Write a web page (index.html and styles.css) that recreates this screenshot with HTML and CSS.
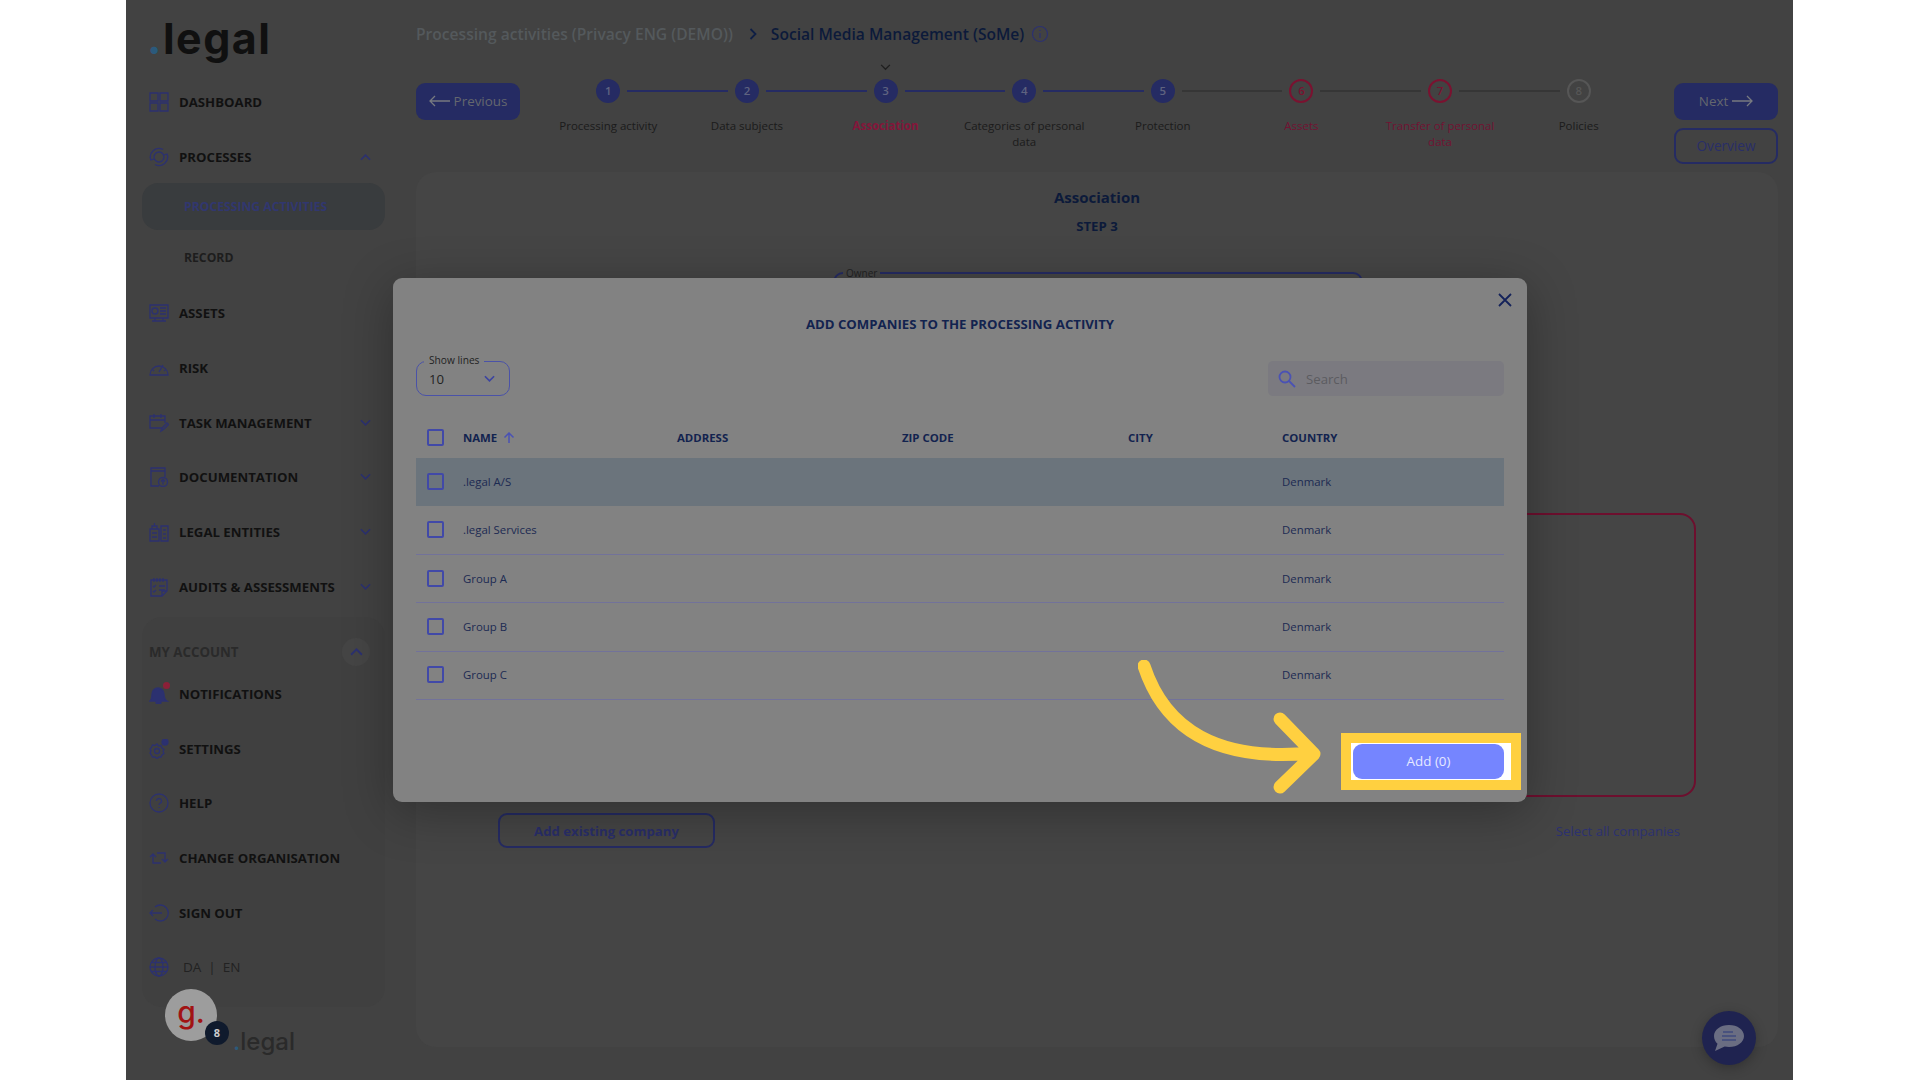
FILE: index.html
```html
<!DOCTYPE html>
<html lang="en">
<head>
  <meta charset="UTF-8">
  <meta name="viewport" content="width=device-width, initial-scale=1.0">
  <title>.legal Add companies</title>
  <link rel="stylesheet" href="styles.css">
</head>
<body>
  <div class="app">
    <aside class="sidebar">
      <div class="logo"><span class="logo-dot">.</span>legal</div>

      <div class="nav-item">
        <svg class="nav-icon" viewBox="0 0 20 20"><path d="M1 1h8v8H1zM11 1h8v8h-8zM1 11h8v8H1zM11 11h8v8h-8z"/></svg>
        <span>Dashboard</span>
      </div>
      <div class="nav-item">
        <svg class="nav-icon" viewBox="0 0 20 20"><circle cx="10" cy="10" r="5"/><path d="M2 13A8.5 8.5 0 0 1 14 2.500M18 7A8.500 8.500 0 0 1 6 17.500M1 10l1 3 3-1M19 10l-1-3-3 1"/></svg>
        <span>Processes</span>
        <svg class="nav-chevron" viewBox="0 0 12 8"><path d="M1 7l5-5 5 5"/></svg>
      </div>
      <div class="sub-item sub-active">Processing activities</div>
      <div class="sub-item">Record</div>
      <div class="nav-item nav-after-sub">
        <svg class="nav-icon" viewBox="0 0 20 20"><path d="M1 2h18v13H1zM6 15v3M14 15v3M3 18h14"/><circle cx="6" cy="8" r="3"/><path d="M11 5h6M11 8h6M11 11h6"/></svg>
        <span>Assets</span>
      </div>
      <div class="nav-item">
        <svg class="nav-icon" viewBox="0 0 20 20"><path d="M1 17a9 9 0 0 1 18 0zM10 14l4-7M4 12l1 1M16 12l-1 1"/></svg>
        <span>Risk</span>
      </div>
      <div class="nav-item">
        <svg class="nav-icon" viewBox="0 0 20 20"><path d="M14 15H1V3h15v7M1 7h15M5 1v4M12 1v4M12 18l1-3 5-5 1.500 1.500-5 5z"/></svg>
        <span>Task management</span>
        <svg class="nav-chevron" viewBox="0 0 12 8"><path d="M1 1l5 5 5-5"/></svg>
      </div>
      <div class="nav-item">
        <svg class="nav-icon" viewBox="0 0 20 20"><path d="M10 19H2V1h14v9M2 4h14"/><circle cx="14" cy="15" r="4.500"/><path d="M14 17.500v-5M12 14.500l2-2 2 2"/></svg>
        <span>Documentation</span>
        <svg class="nav-chevron" viewBox="0 0 12 8"><path d="M1 1l5 5 5-5"/></svg>
      </div>
      <div class="nav-item">
        <svg class="nav-icon" viewBox="0 0 20 20"><path d="M1 19V7h9v12zM3 7V4h5v3M5.500 4V1M12 19V4h7v15zM3 11h5M3 15h5M14 8h3M14 12h3M14 16h3"/></svg>
        <span>Legal entities</span>
        <svg class="nav-chevron" viewBox="0 0 12 8"><path d="M1 1l5 5 5-5"/></svg>
      </div>
      <div class="nav-item">
        <svg class="nav-icon" viewBox="0 0 20 20"><path d="M2 3h16v11l-5 5H2zM5 1v4M8 1v4M11 1v4M14 1v4M4 9l1 1 2-2M4 14l1 1 2-2M10 9h6M10 13h6M13 19v-5h5"/></svg>
        <span>Audits &amp; assessments</span>
        <svg class="nav-chevron" viewBox="0 0 12 8"><path d="M1 1l5 5 5-5"/></svg>
      </div>

      <section class="account">
        <div class="account-head">
          <span>My account</span>
          <span class="account-toggle"><svg viewBox="0 0 12 8"><path d="M1 7l5-5 5 5"/></svg></span>
        </div>
        <div class="nav-item">
          <svg class="nav-icon nav-icon-fill" viewBox="0 0 20 20"><path d="M1 17c2-2 2-4 2-7a6 6 0 0 1 12 0c0 3 0 5 3 7zM7 18a2.500 2.500 0 0 0 5 0z"/></svg>
          <i class="dot-red"></i>
          <span>Notifications</span>
        </div>
        <div class="nav-item">
          <svg class="nav-icon" viewBox="0 0 20 20"><circle cx="8" cy="12" r="2.500"/><path d="M8 5l1.500 2 2.500-.5 1 2.500 2 1.500-1 2 1 2-2 1.500-1 2H10l-2 1.500-2-1.500-2.500 0-1-2L1 14l1-2-1-2 1.500-1.500 1-2.500L6 6.500z"/><circle class="dot-fill" cx="16" cy="3" r="3"/></svg>
          <span>Settings</span>
        </div>
        <div class="nav-item">
          <svg class="nav-icon" viewBox="0 0 20 20"><circle cx="10" cy="10" r="9"/><path d="M7.500 8a2.500 2.500 0 1 1 3.500 2.300c-.7.4-1 .8-1 1.700M10 14v1"/></svg>
          <span>Help</span>
        </div>
        <div class="nav-item">
          <svg class="nav-icon" viewBox="0 0 20 20"><path d="M1 9l3-3 3 3M4 6v9h8M19 11l-3 3-3-3M16 14V5H8"/></svg>
          <span>Change organisation</span>
        </div>
        <div class="nav-item">
          <svg class="nav-icon" viewBox="0 0 20 20"><path d="M6 4a8 8 0 1 1 0 12M13 10H1M4 7l-3 3 3 3"/></svg>
          <span>Sign out</span>
        </div>
        <div class="nav-item lang-row">
          <svg class="nav-icon" viewBox="0 0 20 20"><circle cx="10" cy="10" r="9"/><ellipse cx="10" cy="10" rx="4" ry="9"/><path d="M1 10h18M2 5.500h16M2 14.500h16"/></svg>
          <span class="lang">DA &nbsp;|&nbsp; EN</span>
        </div>
      </section>

      <div class="avatar">g.<span class="avatar-badge">8</span></div>
      <div class="logo-small"><span class="logo-dot">.</span>legal</div>
    </aside>

    <main class="main">
      <div class="crumbs">
        <span class="crumb-parent">Processing activities (Privacy ENG (DEMO))</span>
        <svg class="crumb-sep" viewBox="0 0 8 12"><path d="M1.500 1l5 5-5 5"/></svg>
        <span class="crumb-current">Social Media Management (SoMe)</span>
        <svg class="crumb-info" viewBox="0 0 18 18"><circle cx="9" cy="9" r="7.500"/><path d="M9 8v5M9 5v1"/></svg>
      </div>

      <div class="wizard">
        <button class="btn-solid btn-prev">
          <svg class="btn-arrow" viewBox="0 0 22 12"><path d="M21 6H1M6 1L1 6l5 5"/></svg>Previous
        </button>
        <ol class="steps">
          <li class="step done"><div class="track"><b></b><span>1</span><b class="on"></b></div><p>Processing activity</p></li>
          <li class="step done"><div class="track"><b class="on"></b><span>2</span><b class="on"></b></div><p>Data subjects</p></li>
          <li class="step done current">
            <svg class="step-marker" viewBox="0 0 12 8"><path d="M1 1l5 5 5-5"/></svg>
            <div class="track"><b class="on"></b><span>3</span><b class="on"></b></div><p>Association</p>
          </li>
          <li class="step done"><div class="track"><b class="on"></b><span>4</span><b class="on"></b></div><p>Categories of personal data</p></li>
          <li class="step done"><div class="track"><b class="on"></b><span>5</span><b class="off"></b></div><p>Protection</p></li>
          <li class="step error"><div class="track"><b class="off"></b><span>6</span><b class="off"></b></div><p>Assets</p></li>
          <li class="step error"><div class="track"><b class="off"></b><span>7</span><b class="off"></b></div><p>Transfer of personal data</p></li>
          <li class="step todo"><div class="track"><b class="off"></b><span>8</span><b></b></div><p>Policies</p></li>
        </ol>
        <div class="wizard-right">
          <button class="btn-solid btn-next">Next
            <svg class="btn-arrow" viewBox="0 0 22 12"><path d="M1 6h20M16 1l5 5-5 5"/></svg>
          </button>
          <button class="btn-outline">Overview</button>
        </div>
      </div>

      <div class="card">
        <h2>Association</h2>
        <h3>STEP 3</h3>
        <fieldset class="owner"><legend>Owner</legend></fieldset>
        <div class="red-box"></div>
        <div class="card-actions">
          <button class="btn-add-existing">Add existing company</button>
          <span class="select-all">Select all companies</span>
        </div>
      </div>
    </main>

    <div class="modal">
      <svg class="modal-close" viewBox="0 0 14 14"><path d="M1 1l12 12M13 1L1 13"/></svg>
      <h4>ADD COMPANIES TO THE PROCESSING ACTIVITY</h4>
      <div class="modal-tools">
        <div class="lines-select">
          <span class="lines-label">Show lines</span>
          <span>10</span>
          <svg viewBox="0 0 12 8"><path d="M1 1l5 5 5-5"/></svg>
        </div>
        <div class="search">
          <svg viewBox="0 0 18 18"><circle cx="7" cy="7" r="5.500"/><path d="M11 11l6 6"/></svg>
          <span>Search</span>
        </div>
      </div>
      <table class="companies">
        <thead>
          <tr>
            <th class="col-check"><i class="check"></i></th>
            <th class="col-name">NAME <svg class="sort" viewBox="0 0 12 12"><path d="M6 11V1M1.500 5.500L6 1l4.500 4.500"/></svg></th>
            <th class="col-address">ADDRESS</th>
            <th class="col-zip">ZIP CODE</th>
            <th class="col-city">CITY</th>
            <th>COUNTRY</th>
          </tr>
        </thead>
        <tbody>
          <tr class="row-hover"><td><i class="check"></i></td><td>.legal A/S</td><td></td><td></td><td></td><td>Denmark</td></tr>
          <tr><td><i class="check"></i></td><td>.legal Services</td><td></td><td></td><td></td><td>Denmark</td></tr>
          <tr><td><i class="check"></i></td><td>Group A</td><td></td><td></td><td></td><td>Denmark</td></tr>
          <tr><td><i class="check"></i></td><td>Group B</td><td></td><td></td><td></td><td>Denmark</td></tr>
          <tr><td><i class="check"></i></td><td>Group C</td><td></td><td></td><td></td><td>Denmark</td></tr>
        </tbody>
      </table>
      <div class="add-highlight">
        <button class="btn-modal-add">Add (0)</button>
      </div>
    </div>

    <svg class="guide-arrow" viewBox="0 0 200 140">
      <path d="M6 6C27 70 80 102 174 93M142 59l34 35-34 33"/>
    </svg>

    <div class="chat">
      <svg viewBox="0 0 32 28"><path class="chat-bubble" d="M16 1c8.500 0 15 4.800 15 11s-6.500 11-15 11c-1.500 0-3-.2-4.300-.5L2 27l2.500-7.200C2.300 17.800 1 15.100 1 12 1 5.800 7.500 1 16 1z"/><path class="chat-lines" d="M10 8h10M9 12h14M9 16h14"/></svg>
    </div>
  </div>
</body>
</html>
```

FILE: styles.css
```css
* {
  box-sizing: border-box;
}
body {
  margin: 0;
  background-color: #fff;
  font-family: "Open Sans", Arial, sans-serif;
  color: #1b1b1b;
}
.app {
  position: relative;
  display: flex;
  width: 1667px;
  height: 1080px;
  margin-left: 126px;
  overflow: hidden;
  background-color: #424242;
}

/* sidebar */
.sidebar {
  position: relative;
  flex: 0 0 267px;
  padding: 0 8px 0 16px;
}
.logo {
  height: 74.5px;
  padding: 8px 0 0 5px;
  font-family: Inter, sans-serif;
  font-size: 43px;
  font-weight: 700;
  letter-spacing: 1.5px;
  line-height: 60px;
  color: #101010;
}
.logo-dot {
  color: #2b5a7c;
}
.nav-item {
  position: relative;
  display: flex;
  align-items: center;
  height: 54.8px;
  padding-left: 7px;
  font-size: 13.2px;
  font-weight: 700;
  text-transform: uppercase;
  color: #111;
}
.nav-after-sub {
  margin-top: 5px;
}
.nav-icon {
  flex: 0 0 20px;
  width: 20px;
  height: 20px;
  margin-right: 10px;
  fill: none;
  stroke: #2c3170;
  stroke-width: 1.3;
}
.nav-icon-fill {
  fill: #2c3170;
}
.dot-fill {
  fill: #2c3170;
}
.dot-red {
  position: absolute;
  left: 21px;
  top: 15px;
  width: 7px;
  height: 7px;
  border-radius: 50%;
  background-color: #8c2038;
}
.nav-chevron {
  position: absolute;
  left: 218px;
  width: 11px;
  height: 8px;
  fill: none;
  stroke: #2c3170;
  stroke-width: 1.8;
}
.sub-item {
  display: flex;
  align-items: center;
  height: 47px;
  margin-bottom: 4px;
  padding-left: 42px;
  border-radius: 16px;
  font-size: 12.2px;
  font-weight: 700;
  text-transform: uppercase;
  color: #1d1d1d;
}
.sub-active {
  margin-top: -1.5px;
  background-color: #393c3e;
  color: #31376f;
}
.account {
  position: absolute;
  left: 16px;
  top: 617px;
  width: 243px;
  height: 390px;
  padding-top: 19px;
  border-radius: 20px;
  background-color: #404040;
}
.account .nav-item {
  height: 54.6px;
}
.account-head {
  display: flex;
  align-items: center;
  justify-content: space-between;
  height: 31px;
  padding: 0 15px 0 7px;
  font-size: 13.3px;
  font-weight: 700;
  text-transform: uppercase;
  color: #2a2a2a;
}
.account-toggle {
  display: flex;
  align-items: center;
  justify-content: center;
  width: 28px;
  height: 28px;
  border-radius: 50%;
  background-color: #454545;
}
.account-toggle svg {
  width: 13px;
  height: 9px;
  fill: none;
  stroke: #2c3170;
  stroke-width: 1.8;
}
.lang-row {
  font-weight: 400;
  text-transform: none;
}
.lang {
  margin-left: 4px;
  font-size: 13.5px;
  color: #222;
}
.avatar {
  position: absolute;
  left: 39px;
  top: 989px;
  width: 52px;
  height: 52px;
  border-radius: 50%;
  background-color: #9d9d9d;
  font-family: Inter, sans-serif;
  font-size: 30px;
  font-weight: 500;
  line-height: 46px;
  text-align: center;
  color: #a11313;
}
.avatar-badge {
  position: absolute;
  left: 40px;
  top: 32px;
  width: 24px;
  height: 24px;
  border-radius: 50%;
  background-color: #0f1a2d;
  font-family: "Open Sans", sans-serif;
  font-size: 11px;
  font-weight: 700;
  line-height: 24px;
  color: #ccc;
}
.logo-small {
  position: absolute;
  left: 107px;
  top: 1027px;
  font-family: Inter, sans-serif;
  font-size: 24px;
  font-weight: 500;
  line-height: 30px;
  color: #2a2a2a;
}

/* main */
.main {
  display: flex;
  flex: 1;
  flex-direction: column;
  padding: 0 23px 33px;
}
.crumbs {
  display: flex;
  align-items: center;
  height: 68px;
  font-size: 15.6px;
  font-weight: 600;
}
.crumb-parent {
  color: #54595c;
}
.crumb-sep {
  width: 8px;
  height: 12px;
  margin: 0 14px 0 16px;
  fill: none;
  stroke: #0f1f45;
  stroke-width: 1.8;
}
.crumb-current {
  color: #0c1a3a;
}
.crumb-info {
  width: 18px;
  height: 18px;
  margin-left: 7px;
  fill: none;
  stroke: #2c3170;
  stroke-width: 1.2;
}
.wizard {
  display: flex;
  align-items: flex-start;
  height: 104px;
}
.btn-solid,
.btn-outline,
.btn-add-existing {
  font-family: inherit;
  border-radius: 9px;
}
.btn-solid {
  display: flex;
  align-items: center;
  justify-content: center;
  gap: 3px;
  height: 37px;
  margin-top: 15px;
  padding-bottom: 2px;
  border: 0;
  background-color: #252b63;
  font-size: 13.4px;
  color: #64676e;
}
.btn-prev {
  flex: 0 0 104px;
}
.btn-arrow {
  width: 22px;
  height: 12px;
  fill: none;
  stroke: #777a80;
  stroke-width: 1.3;
}
.steps {
  display: grid;
  flex: 0 0 1109px;
  grid-template-columns: repeat(8, 1fr);
  margin: 10px 26px 0 19px;
  padding: 0;
  list-style: none;
}
.step {
  position: relative;
  text-align: center;
  font-size: 11.5px;
  line-height: 16px;
}
.step p {
  margin: 14px 2px 0;
}
.step-marker {
  position: absolute;
  left: 50%;
  top: -14px;
  width: 11px;
  height: 7px;
  margin-left: -5.5px;
  fill: none;
  stroke: #1f1f1f;
  stroke-width: 1.5;
}
.track {
  display: flex;
  align-items: center;
  height: 26px;
}
.track b {
  flex: 1;
  height: 2px;
}
.track b:first-child {
  margin-right: 7px;
}
.track b:last-child {
  margin-left: 7px;
}
.track b.on {
  background-color: #252b63;
}
.track b.off {
  background-color: #363636;
}
.track span {
  flex: 0 0 24px;
  height: 24px;
  border-radius: 50%;
  font-size: 11.5px;
  font-weight: 600;
  line-height: 24px;
}
.done .track span {
  background-color: #252b63;
  color: #5f6380;
}
.error .track span {
  border: 2px solid #7a1230;
  line-height: 20px;
  color: #7a1230;
}
.todo .track span {
  border: 2px solid #565656;
  line-height: 20px;
  color: #565656;
}
.current p {
  font-weight: 700;
  color: #84163a;
}
.error p {
  color: #721232;
}
.wizard-right {
  display: flex;
  flex: 0 0 104px;
  flex-direction: column;
  gap: 8px;
}
.btn-outline {
  height: 36px;
  padding-bottom: 3px;
  border: 2px solid #252b63;
  background: none;
  font-size: 13.6px;
  color: #292e68;
}
.card {
  flex: 1;
  padding: 15px 82px 0;
  border-radius: 20px;
  background-color: #454545;
  text-align: center;
}
.card h2 {
  margin: 0;
  font-size: 15px;
  font-weight: 700;
  line-height: 21px;
  color: #0c1a3a;
}
.card h3 {
  margin: 8px 0 0;
  font-size: 13.2px;
  font-weight: 700;
  line-height: 20px;
  color: #0c1a3a;
}
.owner {
  width: 530px;
  height: 200px;
  margin: 30px 0 0 335px;
  padding: 0;
  border: 2px solid #252b63;
  border-radius: 10px;
  text-align: left;
}
.owner legend {
  margin-left: 8px;
  padding: 0 3px;
  font-size: 10px;
  line-height: 14px;
  color: #222;
}
.red-box {
  height: 284px;
  margin-top: 47px;
  border: 2px solid #6d0f2e;
  border-radius: 16px;
}
.card-actions {
  display: flex;
  align-items: center;
  justify-content: space-between;
  margin-top: 16px;
  padding-right: 16px;
}
.btn-add-existing {
  width: 217px;
  height: 35px;
  border: 2px solid #252b63;
  background: none;
  font-size: 13.2px;
  font-weight: 700;
  color: #292e68;
}
.select-all {
  font-size: 13.2px;
  color: #2c3170;
}

/* modal */
.modal {
  position: absolute;
  left: 267px;
  top: 278px;
  width: 1134px;
  height: 524px;
  padding: 0 23px;
  border-radius: 9px;
  background-color: #828282;
  box-shadow: 0 10px 50px rgba(0, 0, 0, 0.3);
}
.modal h4 {
  margin: 0;
  padding-top: 38px;
  font-size: 13.2px;
  font-weight: 700;
  line-height: 17px;
  text-align: center;
  color: #12234f;
}
.modal-close {
  position: absolute;
  right: 15px;
  top: 15px;
  width: 14px;
  height: 14px;
  fill: none;
  stroke: #14225a;
  stroke-width: 1.8;
}
.modal-tools {
  display: flex;
  justify-content: space-between;
  margin-top: 28px;
}
.lines-select {
  position: relative;
  display: flex;
  align-items: center;
  justify-content: space-between;
  width: 94px;
  height: 35px;
  padding: 0 14px 0 12px;
  border: 1px solid #4a52a8;
  border-radius: 10px;
  font-size: 13.2px;
  color: #222;
}
.lines-select svg {
  width: 11px;
  height: 8px;
  fill: none;
  stroke: #3c44a0;
  stroke-width: 1.8;
}
.lines-label {
  position: absolute;
  left: 7px;
  top: -9px;
  padding: 0 5px;
  background-color: #828282;
  font-size: 10.2px;
  line-height: 14px;
}
.search {
  display: flex;
  align-items: center;
  gap: 10px;
  width: 236px;
  height: 35px;
  padding-left: 10px;
  border-radius: 5px;
  background-color: #7b7a80;
  font-size: 13.2px;
  color: #5c5c60;
}
.search svg {
  width: 18px;
  height: 18px;
  fill: none;
  stroke: #4a52b4;
  stroke-width: 1.8;
}
.companies {
  width: 1088px;
  margin-top: 20px;
  table-layout: fixed;
  border-collapse: collapse;
  font-size: 11.4px;
  color: #1c2a52;
}
.companies th {
  height: 42px;
  padding: 1px 0 0;
  font-weight: 700;
  text-align: left;
  color: #12234f;
}
.col-check {
  width: 47px;
}
.col-name {
  width: 214px;
}
.col-address {
  width: 225px;
}
.col-zip {
  width: 226px;
}
.col-city {
  width: 154px;
}
.companies td {
  height: 48.3px;
  padding: 0 0 1px;
  border-bottom: 1px solid #72729a;
}
.companies th:first-child,
.companies td:first-child {
  padding-left: 11px;
}
.companies .row-hover td {
  border-bottom: 0;
  background-color: #6b747c;
}
.check {
  display: block;
  width: 17px;
  height: 17px;
  border: 2px solid #4149a8;
  border-radius: 2px;
}
.sort {
  width: 12px;
  height: 12px;
  margin-left: 3px;
  vertical-align: -2px;
  fill: none;
  stroke: #4a52b4;
  stroke-width: 1.5;
}
.add-highlight {
  position: absolute;
  left: 948px;
  top: 455px;
  width: 180px;
  height: 57px;
  padding: 1px 7px 1px 2px;
  border: 10px solid #ffd040;
  background-color: #fff;
}
.btn-modal-add {
  width: 100%;
  height: 100%;
  padding-bottom: 2px;
  border: 0;
  border-radius: 9px;
  background-color: #7585ff;
  font-family: inherit;
  font-size: 13.4px;
  color: #e6e9ff;
}
.guide-arrow {
  position: absolute;
  left: 1012px;
  top: 660px;
  width: 200px;
  height: 140px;
  fill: none;
  stroke: #ffd040;
  stroke-width: 13;
  stroke-linecap: round;
  stroke-linejoin: round;
}
.chat {
  position: absolute;
  left: 1576px;
  top: 1011px;
  display: flex;
  align-items: center;
  justify-content: center;
  width: 54px;
  height: 54px;
  border-radius: 50%;
  background-color: #1f2350;
  box-shadow: 0 3px 12px rgba(0, 0, 0, 0.25);
}
.chat svg {
  width: 32px;
  height: 28px;
}
.chat-bubble {
  fill: #6a6d82;
}
.chat-lines {
  fill: none;
  stroke: #3f4a7e;
  stroke-width: 1.3;
}
```
